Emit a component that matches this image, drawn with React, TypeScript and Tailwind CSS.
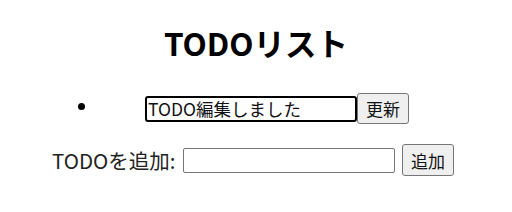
import { useState } from 'react'

export default function App() {
  const [editText, setEditText] = useState('TODO編集しました')
  const [newTodo, setNewTodo] = useState('')

  return (
    <div className="w-[512px] h-[212px] bg-white text-black font-['Noto_Sans_CJK_JP',sans-serif]">
      <h1 className="pt-[22px] h-[64px] text-center text-[31.5px] leading-[40px] font-bold">TODOリスト</h1>

      {/* Todo list */}
      <div className="mt-[29px] flex items-center h-[31px] pl-[78px]">
        <span className="w-[7px] h-[7px] rounded-full bg-black -mt-[4px]" />
        <input
          value={editText}
          onChange={(e) => setEditText(e.target.value)}
          className="ml-[60px] w-[212px] h-[26px] border-2 border-black rounded-[3px] px-[1px] text-[17.5px] leading-none text-[#111] outline-none"
        />
        <button className="w-[52px] h-[31px] bg-[#efefef] border border-[#767676] rounded-[3px] text-[17px] leading-none text-[#111]">
          更新
        </button>
      </div>

      {/* Add form */}
      <div className="mt-[20px] flex items-center h-[32px] pl-[52px]">
        <label className="text-[20.5px] leading-none text-[#222] w-[131px] whitespace-nowrap">TODOを追加:</label>
        <input
          value={newTodo}
          onChange={(e) => setNewTodo(e.target.value)}
          className="w-[212px] h-[25px] border border-[#767676] rounded-[2px] px-[2px] text-[16.5px] outline-none"
        />
        <button className="ml-[7px] w-[52px] h-[32px] bg-[#efefef] border border-[#767676] rounded-[3px] text-[17px] leading-none text-[#111]">
          追加
        </button>
      </div>
    </div>
  )
}
